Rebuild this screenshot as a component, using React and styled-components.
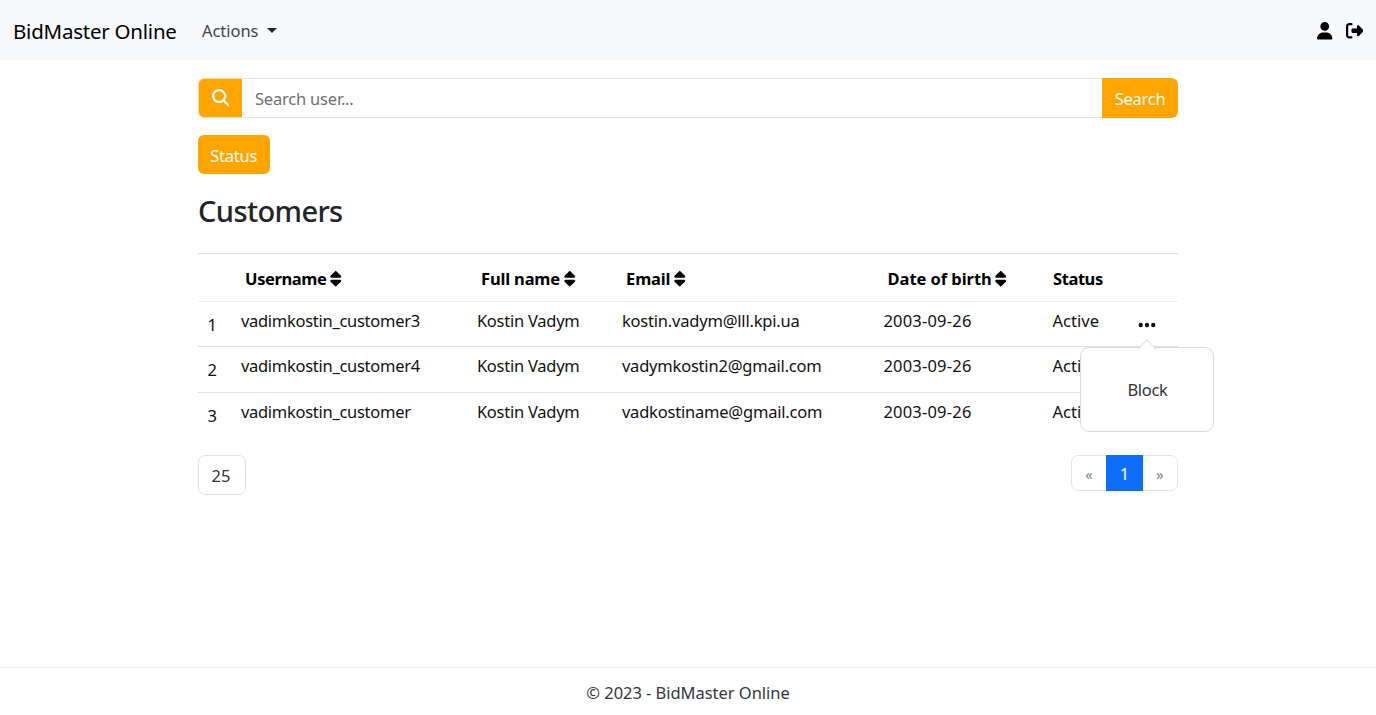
import React from "react";
import styled, { createGlobalStyle } from "styled-components";
import {
  FaUser,
  FaRightFromBracket,
  FaMagnifyingGlass,
  FaSort,
  FaEllipsis,
} from "react-icons/fa6";

const GlobalStyle = createGlobalStyle`
  *, *::before, *::after { box-sizing: border-box; }
  body {
    margin: 0;
    background: #fff;
    color: #212529;
    font-family: "Segoe UI", "Noto Sans", "Open Sans", sans-serif;
    font-size: 16.5px;
    line-height: 26px;
  }
  button, input { font: inherit; letter-spacing: inherit; }
`;

const Page = styled.div`
  min-height: 715px;
  display: flex;
  flex-direction: column;
`;

const Navbar = styled.header`
  height: 60px;
  padding: 0 13px;
  display: flex;
  align-items: center;
  background: #f8f9fb;
`;

const Brand = styled.a`
  color: #000;
  font-size: 20.5px;
  letter-spacing: -0.23px;
  padding-top: 1px;
  white-space: nowrap;
  width: 189px;
`;

const NavDropdown = styled.a`
  display: flex;
  align-items: center;
  gap: 9px;
  padding-top: 2px;
  color: #414549;
  letter-spacing: -0.05px;
`;

const Caret = styled.span`
  border-top: 5px solid #212529;
  border-left: 5px solid transparent;
  border-right: 5px solid transparent;
  margin-bottom: 2px;
`;

const NavIcons = styled.div`
  margin-left: auto;
  display: flex;
  align-items: center;
  gap: 12px;
  padding-top: 2px;
  color: #000;
  svg { display: block; }
`;

const Container = styled.main`
  width: 980px;
  margin: 18px auto 0;
  flex: 1;
`;

const SearchGroup = styled.form`
  display: flex;
  height: 40px;
  border-radius: 6px;
  overflow: hidden;
`;

const SearchIcon = styled.span`
  width: 44px;
  display: flex;
  align-items: center;
  justify-content: center;
  background: orange;
  color: #fff;
  border: 1px solid #f3ddb4;
  border-right: 0;
  border-radius: 6px 0 0 6px;
  svg { margin-right: 0.5px; }
`;

const SearchInput = styled.input`
  flex: 1;
  border: 1px solid #e3e6e9;
  border-width: 1px 0;
  padding: 1px 13px 0;
  outline: 0;
  letter-spacing: -0.2px;
  &::placeholder { color: #6c7075; opacity: 1; }
`;

const Button = styled.button`
  width: ${(p) => p.$width};
  height: ${(p) => p.$height};
  border: 0;
  border-radius: ${(p) => (p.$attached ? "0 6px 6px 0" : "6px")};
  background: orange;
  color: #fff;
  padding: 2px 0 0;
  letter-spacing: -0.25px;
`;

const Filters = styled.div`
  display: flex;
  margin-top: 17px;
`;

const Title = styled.h2`
  margin: 17px 0 23px;
  font-size: 29px;
  font-weight: 500;
  line-height: 39px;
  letter-spacing: -0.6px;
`;

const Table = styled.table`
  width: 100%;
  table-layout: fixed;
  border-collapse: separate;
  border-spacing: 0;
  border-top: 1px solid #dee2e6;
  color: #111;
`;

const HeadCell = styled.th`
  height: 48px;
  padding: 3px 0 0 ${(p) => (p.$sortable ? "12.6px" : "9px")};
  border-bottom: 1px solid #eceef0;
  text-align: left;
  font-weight: 700;
  letter-spacing: ${(p) => p.$track || "-0.4px"};
  color: #000;
  white-space: nowrap;
`;

const SortIcon = styled(FaSort)`
  margin-left: 0.6px;
`;

const HeadLabel = styled.span`
  display: inline-flex;
  align-items: center;
`;

const Row = styled.tr`
  height: ${(p) => p.$height};
  &:not(:last-child) td { border-bottom: 1px solid #dee2e6; }
`;

const Cell = styled.td`
  padding: 6px 0 0 8.4px;
  vertical-align: top;
  white-space: nowrap;
  letter-spacing: ${(p) => p.$track || "0"};
`;

const IndexCell = styled(Cell)`
  padding: 10px 0 0 9.5px;
`;

const MenuAnchor = styled.div`
  position: relative;
  width: 18px;
  margin: 7px 0 0 7.1px;
  svg { display: block; }
`;

const Popover = styled.div`
  position: absolute;
  top: 32px;
  left: -57px;
  width: 134px;
  height: 85px;
  display: flex;
  align-items: center;
  justify-content: center;
  background: #fff;
  border: 1px solid #d9dadc;
  border-radius: 9px;
  color: #303438;
  letter-spacing: -0.3px;
`;

const PopoverArrow = styled.svg`
  position: absolute;
  top: -9px;
  left: 57px;
`;

const TableFooter = styled.div`
  display: flex;
  justify-content: space-between;
  align-items: flex-start;
  margin-top: 17px;
`;

const PageSize = styled.div`
  width: 48px;
  height: 40px;
  padding: 7px 0 0 12.5px;
  border: 1px solid #dee2e6;
  border-radius: 7px;
  color: #303438;
`;

const Pagination = styled.nav`
  display: flex;
  height: 36px;
  width: 107px;
  border: 1px solid #e3e6e9;
  border-radius: 7px;
`;

const PageLink = styled.a`
  flex: 1;
  display: flex;
  align-items: center;
  justify-content: center;
  padding-top: 2px;
  font-size: ${(p) => (p.$active ? "16.5px" : "15px")};
  color: ${(p) => (p.$active ? "#fff" : "#7b8187")};
  background: ${(p) => (p.$active ? "#0d6efd" : "transparent")};
  flex-basis: ${(p) => (p.$active ? "2px" : "0")};
  margin: ${(p) => (p.$active ? "-1px 0" : "0")};
`;

const Footer = styled.footer`
  height: 48px;
  border-top: 1px solid #e9ebed;
  padding-top: 12px;
  text-align: center;
  color: #33373b;
  letter-spacing: -0.04px;
`;

const columns = [
  { label: "Username", sortable: true, track: "-0.4px" },
  { label: "Full name", sortable: true, track: "-0.18px" },
  { label: "Email", sortable: true, track: "-0.2px" },
  { label: "Date of birth", sortable: true, track: "-0.06px" },
  { label: "Status", sortable: false, track: "-0.42px" },
];

const widths = [34.5, 236, 145, 261.5, 169, 78, 56];

const customers = [
  { username: "vadimkostin_customer3", name: "Kostin Vadym", email: "kostin.vadym@lll.kpi.ua", born: "2003-09-26", status: "Active" },
  { username: "vadimkostin_customer4", name: "Kostin Vadym", email: "vadymkostin2@gmail.com", born: "2003-09-26", status: "Active" },
  { username: "vadimkostin_customer", name: "Kostin Vadym", email: "vadkostiname@gmail.com", born: "2003-09-26", status: "Active" },
];

const rowHeights = ["45px", "46px", "45px"];

function ActionsMenu() {
  return (
    <MenuAnchor>
      <FaEllipsis size={20} />
      <Popover>
        <PopoverArrow width="18" height="10" viewBox="0 0 18 10">
          <path d="M0 10 9 .7 18 10" fill="#fff" stroke="#d9dadc" />
        </PopoverArrow>
        Block
      </Popover>
    </MenuAnchor>
  );
}

export default function App() {
  return (
    <Page>
      <GlobalStyle />
      <Navbar>
        <Brand>BidMaster Online</Brand>
        <NavDropdown>
          Actions <Caret />
        </NavDropdown>
        <NavIcons>
          <FaUser size={17.5} />
          <FaRightFromBracket size={17.5} />
        </NavIcons>
      </Navbar>
      <Container>
        <SearchGroup>
          <SearchIcon>
            <FaMagnifyingGlass size={17.5} />
          </SearchIcon>
          <SearchInput placeholder="Search user..." />
          <Button type="button" $width="76px" $height="40px" $attached>
            Search
          </Button>
        </SearchGroup>
        <Filters>
          <Button $width="71.5px" $height="39px">Status</Button>
        </Filters>
        <Title>Customers</Title>
        <Table>
          <colgroup>
            {widths.map((w, i) => (
              <col key={i} width={w} />
            ))}
          </colgroup>
          <thead>
            <tr>
              <HeadCell />
              {columns.map((c) => (
                <HeadCell key={c.label} $sortable={c.sortable} $track={c.track}>
                  <HeadLabel>
                    {c.label}
                    {c.sortable && <SortIcon size={17.5} />}
                  </HeadLabel>
                </HeadCell>
              ))}
              <HeadCell />
            </tr>
          </thead>
          <tbody>
            {customers.map((c, i) => (
              <Row key={c.username} $height={rowHeights[i]}>
                <IndexCell>{i + 1}</IndexCell>
                <Cell $track="-0.28px">{c.username}</Cell>
                <Cell $track="-0.25px">{c.name}</Cell>
                <Cell $track="-0.2px">{c.email}</Cell>
                <Cell $track="0.2px">{c.born}</Cell>
                <Cell $track="0.05px">{c.status}</Cell>
                <Cell>{i === 0 && <ActionsMenu />}</Cell>
              </Row>
            ))}
          </tbody>
        </Table>
        <TableFooter>
          <PageSize>25</PageSize>
          <Pagination>
            <PageLink>«</PageLink>
            <PageLink $active>1</PageLink>
            <PageLink>»</PageLink>
          </Pagination>
        </TableFooter>
      </Container>
      <Footer>© 2023 - BidMaster Online</Footer>
    </Page>
  );
}
